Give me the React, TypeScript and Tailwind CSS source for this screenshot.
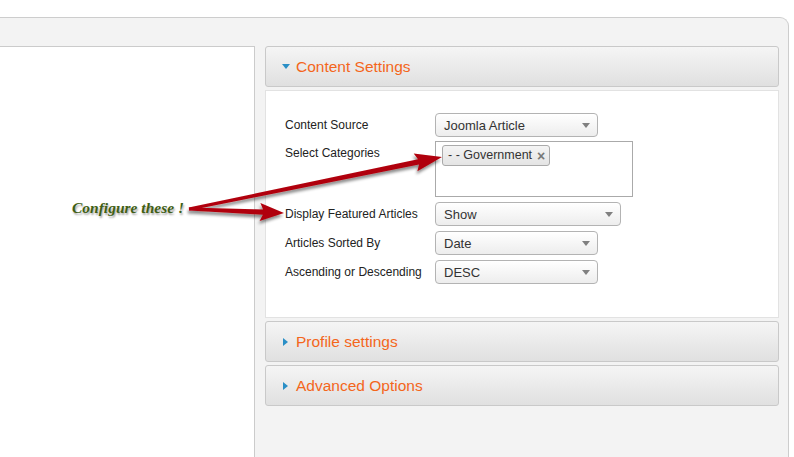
import React from "react";

type Pt = [number, number];

// Builds an arrow outline (tapered shaft + head) from a start point to a tip.
function arrowPoints(from: Pt, to: Pt, headLen: number, headHalf: number, tail: number, neck: number): string {
  const dx = to[0] - from[0];
  const dy = to[1] - from[1];
  const len = Math.hypot(dx, dy);
  const ux = dx / len;
  const uy = dy / len;
  const nx = -uy;
  const ny = ux;
  const bx = to[0] - ux * headLen;
  const by = to[1] - uy * headLen;
  const pts: Pt[] = [
    [from[0] + nx * tail, from[1] + ny * tail],
    [bx + nx * neck, by + ny * neck],
    [bx + nx * headHalf - ux * 3, by + ny * headHalf - uy * 3],
    [to[0], to[1]],
    [bx - nx * headHalf - ux * 3, by - ny * headHalf - uy * 3],
    [bx - nx * neck, by - ny * neck],
    [from[0] - nx * tail, from[1] - ny * tail],
  ];
  return pts.map((p) => `${p[0].toFixed(1)},${p[1].toFixed(1)}`).join(" ");
}

function Caret() {
  return (
    <svg width="8" height="5" viewBox="0 0 8 5" className="shrink-0">
      <path d="M0 0h8L4 5z" fill="#808080" />
    </svg>
  );
}

function Select({ value, width }: { value: string; width: string }) {
  return (
    <div
      className={`${width} h-[24px] flex items-center justify-between pl-[8px] pr-[7px] rounded-[4px] border border-[#b3b3b3] bg-gradient-to-b from-white to-[#ededed] shadow-[inset_0_1px_0_#fff]`}
    >
      <span className="text-[13px] text-[#333] leading-none">{value}</span>
      <Caret />
    </div>
  );
}

function Row({ label, children, top = false }: { label: string; children: React.ReactNode; top?: boolean }) {
  return (
    <div className={`flex ${top ? "items-start" : "items-center"}`}>
      <div className="w-[150px] h-[24px] flex items-center text-[12px] text-[#222]">{label}</div>
      {children}
    </div>
  );
}

function PanelHeader({ title, open }: { title: string; open?: boolean }) {
  return (
    <div className="h-[41px] flex items-center rounded-[3px] border border-[#c9c9c9] bg-gradient-to-b from-[#f5f5f5] to-[#e0e0e0] pl-[16px]">
      <div className="w-[14px] flex items-center">
        {open ? (
          <svg width="8" height="5" viewBox="0 0 8 5">
            <path d="M0 0h8L4 5z" fill="#2a8fc6" />
          </svg>
        ) : (
          <svg width="5" height="8" viewBox="0 0 5 8" className="ml-[1px]">
            <path d="M0 0v8L5 4z" fill="#2a8fc6" />
          </svg>
        )}
      </div>
      <span className="text-[15.5px] text-[#f4661b] leading-none">{title}</span>
    </div>
  );
}

export default function App() {
  const origin: Pt = [189, 209];
  return (
    <div
      className="relative w-[794px] h-[457px] overflow-hidden bg-white pt-[17px]"
      style={{ fontFamily: '"Liberation Sans", Arial, sans-serif' }}
    >
      <div className="w-[789px] h-[440px] flex items-start pt-[28px] bg-[#f3f3f3] border-t border-r border-[#cdcdcd] rounded-tr-[9px]">
        {/* left editing area */}
        <div className="w-[255px] h-[420px] bg-white border-t border-r border-[#cbcbcb]" />

        {/* right accordion column */}
        <div className="ml-[10px] w-[514px] flex flex-col">
          <PanelHeader title="Content Settings" open />
          <div className="mt-[3px] h-[228px] bg-white border border-[#e2e2e2] pl-[19px] pt-[22px]">
            <Row label="Content Source">
              <Select value="Joomla Article" width="w-[163px]" />
            </Row>
            <div className="mt-[4px]">
              <Row label="Select Categories" top>
                <div className="w-[198px] h-[56px] border border-[#aaa] bg-white pt-[3px] pl-[6px] flex items-start">
                  <div className="flex items-center h-[21px] pl-[5px] pr-[4px] rounded-[3px] border border-[#aaa] bg-gradient-to-b from-[#f4f4f4] to-[#e4e4e4] text-[12.5px] text-[#333] leading-none">
                    <span>- - Government</span>
                    <span className="ml-[5px] text-[14px] font-bold text-[#777] leading-none">×</span>
                  </div>
                </div>
              </Row>
            </div>
            <div className="mt-[5px]">
              <Row label="Display Featured Articles">
                <Select value="Show" width="w-[186px]" />
              </Row>
            </div>
            <div className="mt-[5px]">
              <Row label="Articles Sorted By">
                <Select value="Date" width="w-[163px]" />
              </Row>
            </div>
            <div className="mt-[5px]">
              <Row label="Ascending or Descending">
                <Select value="DESC" width="w-[163px]" />
              </Row>
            </div>
          </div>
          <div className="mt-[3px]">
            <PanelHeader title="Profile settings" />
          </div>
          <div className="mt-[3px]">
            <PanelHeader title="Advanced Options" />
          </div>
        </div>
      </div>

      {/* annotation callout */}
      <div
        className="absolute left-[72px] top-[196px] text-[15.5px] font-bold italic text-[#3f5f14]"
        style={{ fontFamily: '"Liberation Serif", "Times New Roman", serif', textShadow: "1px 2px 2px rgba(0,0,0,0.35)" }}
      >
        Configure these !
      </div>
      <svg className="absolute left-0 top-0 pointer-events-none" width="794" height="457">
        <defs>
          <filter id="arrowShadow" x="-20%" y="-50%" width="140%" height="200%">
            <feDropShadow dx="-1" dy="3" stdDeviation="1.8" floodColor="#000" floodOpacity="0.45" />
          </filter>
        </defs>
        <g filter="url(#arrowShadow)" fill="#b0000c">
          <polygon points={arrowPoints(origin, [442, 157], 24, 9, 1.5, 2.6)} />
          <polygon points={arrowPoints(origin, [284, 213], 21, 9, 1.5, 2.6)} />
        </g>
      </svg>
    </div>
  );
}
